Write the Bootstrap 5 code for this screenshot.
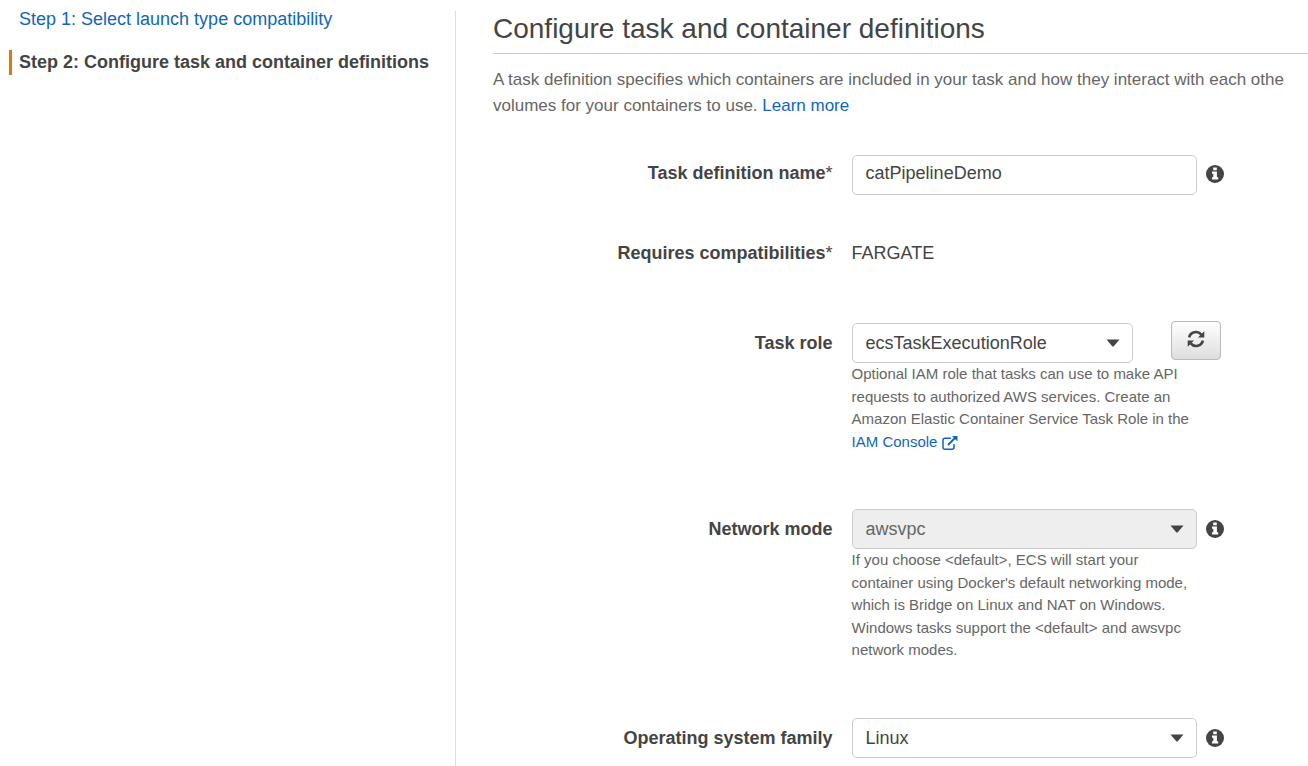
<!DOCTYPE html>
<html lang="en">
<head>
<meta charset="utf-8">
<meta name="viewport" content="width=device-width, initial-scale=1">
<title>Configure task and container definitions</title>
<link rel="stylesheet" href="https://cdn.jsdelivr.net/npm/bootstrap@5.3.0/dist/css/bootstrap.min.css">
<style>
  body { font-family: "Liberation Sans", Arial, sans-serif; font-size: 18px; line-height: 26px; color: #444; background: #fff; overflow-x: hidden; }
  a { color: #1166bb; text-decoration: none; }
  a:hover { text-decoration: underline; }
  .wizard { min-height: 100vh; padding-top: 11px; }
  .steps { flex: 0 0 456px; border-right: 1px solid #ddd; padding-left: 9px; }
  .steps li { border-left: 3px solid transparent; padding-left: 7px; line-height: 25px; }
  .steps li.current { border-left-color: #e07700; font-weight: bold; }
  .steps li:first-child { margin-top: -4px; margin-bottom: 18px; }
  .content-pane { min-width: 0; padding-left: 37px; }
  h1 { font-size: 28px; line-height: 34px; color: #444; border-bottom: 1px solid #ccc; padding-top: 1px; padding-bottom: 7px; margin-bottom: 13px; }
  .intro { font-size: 17px; color: #666; margin-bottom: 36px; }
  .field-label { font-weight: bold; text-align: right; padding-top: 7px; }
  .field-label span { font-weight: normal; }
  .field-body { padding-left: 19px; }
  .field { margin-bottom: 56px; }
  .field.tight { margin-bottom: 40px; }
  .tight .field-label, .plain .field-label { padding-top: 5px; }
  .tight .info-btn { padding-bottom: 3px !important; }
  .control-box { width: 345px; }
  .control-box.narrow { width: 281px; }
  .form-control, .form-select { height: 40px; padding: 0 13px; font-size: 18px; line-height: 26px; color: #444; border-color: #ccc; border-radius: 5px; }
  .form-control { padding-bottom: 3px; }
  .form-select { padding-right: 36px; background-image: url("data:image/svg+xml,%3Csvg xmlns='http://www.w3.org/2000/svg' viewBox='0 0 14 8'%3E%3Cpath fill='%23444' d='M.5.5h13L8 7Q7 8 6 7z'/%3E%3C/svg%3E"); background-size: 14px 8px; background-position: right 12px center; }
  .form-select:disabled { background-color: #eee; color: #666; border-color: #ccc; }
  .help { width: 345px; font-size: 15px; line-height: 1.5; color: #666; }
  .info-btn { color: #444; line-height: 0; margin-left: 9px; }
  .refresh-btn { width: 50px; height: 39px; margin-left: 38px; margin-top: -2px; border: 1px solid #bbb; border-radius: 4px; background: linear-gradient(#fff, #ddd); color: #444; line-height: 0; }
  .refresh-btn svg { margin-bottom: 3px; }
  .static-value { padding-top: 5px; padding-bottom: 1px; }
</style>
</head>
<body>
<svg class="d-none" xmlns="http://www.w3.org/2000/svg">
  <symbol id="info" viewBox="0 0 18 18">
    <circle cx="9" cy="9" r="9" fill="currentColor"/>
    <path fill="#fff" d="M7.2 2.6h3.6v2.6H7.2zM6 6.6h4.9v5.7h1.3v2.2H6v-2.2h1.3V8.8H6z"/>
  </symbol>
</svg>
<div class="wizard d-flex">
  <nav class="steps" aria-label="Steps">
    <ol class="list-unstyled mb-0">
      <li><a href="#">Step 1: Select launch type compatibility</a></li>
      <li class="current" aria-current="step">Step 2: Configure task and container definitions</li>
    </ol>
  </nav>
  <main class="content-pane flex-grow-1">
    <h1 class="fw-normal">Configure task and container definitions</h1>
    <p class="intro text-nowrap">A task definition specifies which containers are included in your task and how they interact with each othe<br>volumes for your containers to use. <a href="#">Learn more</a></p>
    <form>
      <div class="row g-0 field tight">
        <label class="col-5 field-label" for="taskName">Task definition name<span>*</span></label>
        <div class="col-7 field-body d-flex align-items-center">
          <div class="control-box"><input class="form-control" id="taskName" type="text" value="catPipelineDemo"></div>
          <button type="button" class="btn border-0 p-0 info-btn" aria-label="Info"><svg width="18" height="18"><use href="#info"/></svg></button>
        </div>
      </div>
      <div class="row g-0 field plain">
        <div class="col-5 field-label">Requires compatibilities<span>*</span></div>
        <div class="col-7 field-body static-value">FARGATE</div>
      </div>
      <div class="row g-0 field">
        <label class="col-5 field-label" for="taskRole">Task role</label>
        <div class="col-7 field-body">
          <div class="d-flex align-items-start">
            <div class="control-box narrow"><select class="form-select" id="taskRole"><option>ecsTaskExecutionRole</option></select></div>
            <button type="button" class="btn p-0 refresh-btn" aria-label="Refresh">
              <svg width="18" height="18" viewBox="0 0 18 18" fill="none" stroke="currentColor" stroke-width="2.6"><path d="M2.1 7.4A7 7 0 0 1 14.3 4.6M15.9 10.6A7 7 0 0 1 3.7 13.4"/><path fill="currentColor" stroke="none" d="M17.3 1.2v6.3h-6.3zM.7 16.8v-6.3H7z"/></svg>
            </button>
          </div>
          <div class="help">Optional IAM role that tasks can use to make API requests to authorized AWS services. Create an Amazon Elastic Container Service Task Role in the <a href="#" class="text-nowrap">IAM Console <svg width="16" height="14" viewBox="0 0 16 14" fill="none" stroke="currentColor" stroke-width="1.5" aria-hidden="true"><path d="M9 2.2H3Q1 2.2 1 4.2v7q0 2 2 2h7q2 0 2-2V8"/><path stroke-width="2" d="M6 9l7-7"/><path fill="currentColor" stroke="none" d="M10 0h5.5v5.5z"/></svg></a></div>
        </div>
      </div>
      <div class="row g-0 field">
        <label class="col-5 field-label" for="networkMode">Network mode</label>
        <div class="col-7 field-body">
          <div class="d-flex align-items-center">
            <div class="control-box"><select class="form-select" id="networkMode" disabled><option>awsvpc</option></select></div>
            <button type="button" class="btn border-0 p-0 info-btn" aria-label="Info"><svg width="18" height="18"><use href="#info"/></svg></button>
          </div>
          <div class="help">If you choose &lt;default&gt;, ECS will start your container using Docker's default networking mode, which is Bridge on Linux and NAT on Windows. Windows tasks support the &lt;default&gt; and awsvpc network modes.</div>
        </div>
      </div>
      <div class="row g-0">
        <label class="col-5 field-label" for="osFamily">Operating system family</label>
        <div class="col-7 field-body d-flex align-items-center">
          <div class="control-box"><select class="form-select" id="osFamily"><option>Linux</option></select></div>
          <button type="button" class="btn border-0 p-0 info-btn" aria-label="Info"><svg width="18" height="18"><use href="#info"/></svg></button>
        </div>
      </div>
    </form>
  </main>
</div>
<script src="https://cdn.jsdelivr.net/npm/bootstrap@5.3.0/dist/js/bootstrap.bundle.min.js"></script>
</body>
</html>
